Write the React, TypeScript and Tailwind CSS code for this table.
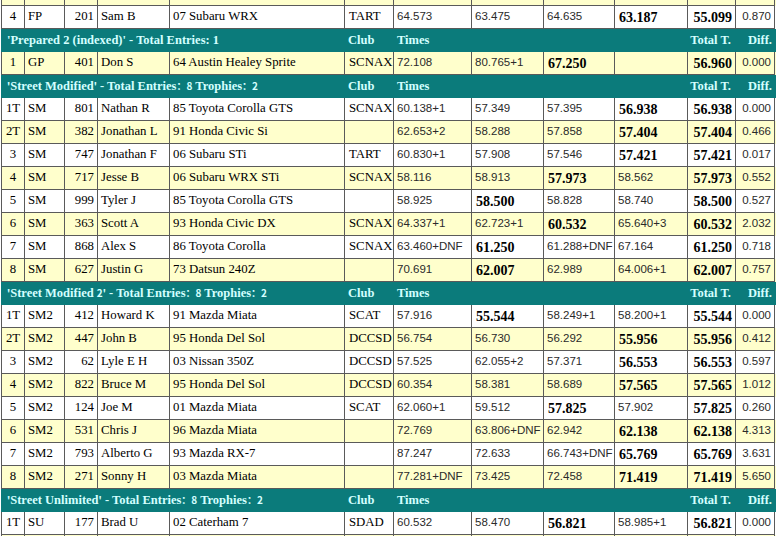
import React from "react";

type Row = {
  pos: string;
  cls: string;
  num: string;
  name: string;
  car: string;
  club: string;
  t: string[];
  best: number;
  total: string;
  diff: string;
  y: boolean;
};

type Header = { title: React.ReactNode };

const GRID =
  "grid grid-cols-[23px_40px_33px_72px_175px_49px_78px_72px_71px_73px_48px_40px]";

const serif = "font-['Liberation_Serif',serif]";
const sans = "font-['Liberation_Sans',Arial,sans-serif]";

function Q({ children }: { children: React.ReactNode }) {
  return <span className="font-['Noto_Sans_CJK_SC',sans-serif] text-[10px] font-bold">{children}</span>;
}

function DataRow({ r }: { r: Row }) {
  const bg = r.y ? "bg-[#ffffcc]" : "bg-white";
  const cell = `h-[23px] border-l border-b border-[#5a5a5a] flex items-center overflow-hidden whitespace-nowrap`;
  const txt = `${serif} text-[12.8px] text-black`;
  return (
    <div className={`${GRID} ${bg}`}>
      <div className={`${cell} justify-center ${txt}`}>{r.pos}</div>
      <div className={`${cell} pl-[3px] ${txt}`}>{r.cls}</div>
      <div className={`${cell} justify-end pr-[3px] ${txt}`}>{r.num}</div>
      <div className={`${cell} pl-[3px] ${txt}`}>{r.name}</div>
      <div className={`${cell} pl-[3px] ${txt}`}>{r.car}</div>
      <div className={`${cell} pl-[4px] ${txt}`}>{r.club}</div>
      {r.t.map((v, i) =>
        i === r.best ? (
          <div key={i} className={`${cell} pl-[4px] ${serif} text-[14px] font-bold text-black`}>{v}</div>
        ) : (
          <div key={i} className={`${cell} pl-[3px] ${sans} text-[11.5px] text-[#2a2a2a]`}>{v}</div>
        )
      )}
      <div className={`${cell} justify-end pr-[3px] ${serif} text-[14px] font-bold text-black`}>{r.total}</div>
      <div className={`${cell} justify-end pr-[3px] border-r ${sans} text-[11.5px] text-[#2a2a2a]`}>{r.diff}</div>
    </div>
  );
}

function HeaderRow({ h }: { h: Header }) {
  const cell = `h-[23px] border-b border-[#0b7b7b] flex items-center whitespace-nowrap ${serif} text-[12.5px] font-bold text-[#d4ffff]`;
  return (
    <div className={`${GRID} bg-[#0b7b7b]`}>
      <div className={`${cell} col-span-5 pl-[6px]`}>{h.title}</div>
      <div className={`${cell} pl-[4px]`}>Club</div>
      <div className={`${cell} pl-[4px]`}>Times</div>
      <div className={cell}></div>
      <div className={cell}></div>
      <div className={cell}></div>
      <div className={`${cell} justify-end pr-[4px]`}>Total T.</div>
      <div className={`${cell} justify-end pr-[3px]`}>Diff.</div>
    </div>
  );
}

const mk = (
  pos: string,
  cls: string,
  num: string,
  name: string,
  car: string,
  club: string,
  t: string[],
  best: number,
  total: string,
  diff: string,
  y: boolean
): Row => ({ pos, cls, num, name, car, club, t, best, total, diff, y });

const titleSM = (name: string) => (
  <span>
    <Q>'</Q>
    {name}
    <Q>'</Q> - Total Entries<Q>：8</Q> Trophies<Q>：2</Q>
  </span>
);

type Item = { kind: "row"; r: Row } | { kind: "head"; h: Header };

const items: Item[] = [
  { kind: "row", r: mk("", "", "", "", "", "", ["", "", "", ""], -1, "", "", true) },
  { kind: "row", r: mk("4", "FP", "201", "Sam B", "07 Subaru WRX", "TART", ["64.573", "63.475", "64.635", "63.187"], 3, "55.099", "0.870", false) },
  { kind: "head", h: { title: <span>'Prepared 2 (indexed)' - Total Entries: 1</span> } },
  { kind: "row", r: mk("1", "GP", "401", "Don S", "64 Austin Healey Sprite", "SCNAX", ["72.108", "80.765+1", "67.250", ""], 2, "56.960", "0.000", true) },
  { kind: "head", h: { title: titleSM("Street Modified") } },
  { kind: "row", r: mk("1T", "SM", "801", "Nathan R", "85 Toyota Corolla GTS", "SCNAX", ["60.138+1", "57.349", "57.395", "56.938"], 3, "56.938", "0.000", false) },
  { kind: "row", r: mk("2T", "SM", "382", "Jonathan L", "91 Honda Civic Si", "", ["62.653+2", "58.288", "57.858", "57.404"], 3, "57.404", "0.466", true) },
  { kind: "row", r: mk("3", "SM", "747", "Jonathan F", "06 Subaru STi", "TART", ["60.830+1", "57.908", "57.546", "57.421"], 3, "57.421", "0.017", false) },
  { kind: "row", r: mk("4", "SM", "717", "Jesse B", "06 Subaru WRX STi", "SCNAX", ["58.116", "58.913", "57.973", "58.562"], 2, "57.973", "0.552", true) },
  { kind: "row", r: mk("5", "SM", "999", "Tyler J", "85 Toyota Corolla GTS", "", ["58.925", "58.500", "58.828", "58.740"], 1, "58.500", "0.527", false) },
  { kind: "row", r: mk("6", "SM", "363", "Scott A", "93 Honda Civic DX", "SCNAX", ["64.337+1", "62.723+1", "60.532", "65.640+3"], 2, "60.532", "2.032", true) },
  { kind: "row", r: mk("7", "SM", "868", "Alex S", "86 Toyota Corolla", "SCNAX", ["63.460+DNF", "61.250", "61.288+DNF", "67.164"], 1, "61.250", "0.718", false) },
  { kind: "row", r: mk("8", "SM", "627", "Justin G", "73 Datsun 240Z", "", ["70.691", "62.007", "62.989", "64.006+1"], 1, "62.007", "0.757", true) },
  { kind: "head", h: { title: (
    <span>
      <Q>'</Q>Street Modified <Q>2'</Q> - Total Entries<Q>：8</Q> Trophies<Q>：2</Q>
    </span>
  ) } },
  { kind: "row", r: mk("1T", "SM2", "412", "Howard K", "91 Mazda Miata", "SCAT", ["57.916", "55.544", "58.249+1", "58.200+1"], 1, "55.544", "0.000", false) },
  { kind: "row", r: mk("2T", "SM2", "447", "John B", "95 Honda Del Sol", "DCCSD", ["56.754", "56.730", "56.292", "55.956"], 3, "55.956", "0.412", true) },
  { kind: "row", r: mk("3", "SM2", "62", "Lyle E H", "03 Nissan 350Z", "DCCSD", ["57.525", "62.055+2", "57.371", "56.553"], 3, "56.553", "0.597", false) },
  { kind: "row", r: mk("4", "SM2", "822", "Bruce M", "95 Honda Del Sol", "DCCSD", ["60.354", "58.381", "58.689", "57.565"], 3, "57.565", "1.012", true) },
  { kind: "row", r: mk("5", "SM2", "124", "Joe M", "01 Mazda Miata", "SCAT", ["62.060+1", "59.512", "57.825", "57.902"], 2, "57.825", "0.260", false) },
  { kind: "row", r: mk("6", "SM2", "531", "Chris J", "96 Mazda Miata", "", ["72.769", "63.806+DNF", "62.942", "62.138"], 3, "62.138", "4.313", true) },
  { kind: "row", r: mk("7", "SM2", "793", "Alberto G", "93 Mazda RX-7", "", ["87.247", "72.633", "66.743+DNF", "65.769"], 3, "65.769", "3.631", false) },
  { kind: "row", r: mk("8", "SM2", "271", "Sonny H", "03 Mazda Miata", "", ["77.281+DNF", "73.425", "72.458", "71.419"], 3, "71.419", "5.650", true) },
  { kind: "head", h: { title: titleSM("Street Unlimited") } },
  { kind: "row", r: mk("1T", "SU", "177", "Brad U", "02 Caterham 7", "SDAD", ["60.532", "58.470", "56.821", "58.985+1"], 2, "56.821", "0.000", false) },
  { kind: "row", r: mk("", "", "", "", "", "", ["", "", "", ""], -1, "", "", true) },
];

export default function App() {
  return (
    <div className="w-[782px] h-[536px] overflow-hidden bg-white">
      <div className="ml-px -mt-[17px] w-[775px]">
        {items.map((it, i) =>
          it.kind === "row" ? <DataRow key={i} r={it.r} /> : <HeaderRow key={i} h={it.h} />
        )}
      </div>
    </div>
  );
}
